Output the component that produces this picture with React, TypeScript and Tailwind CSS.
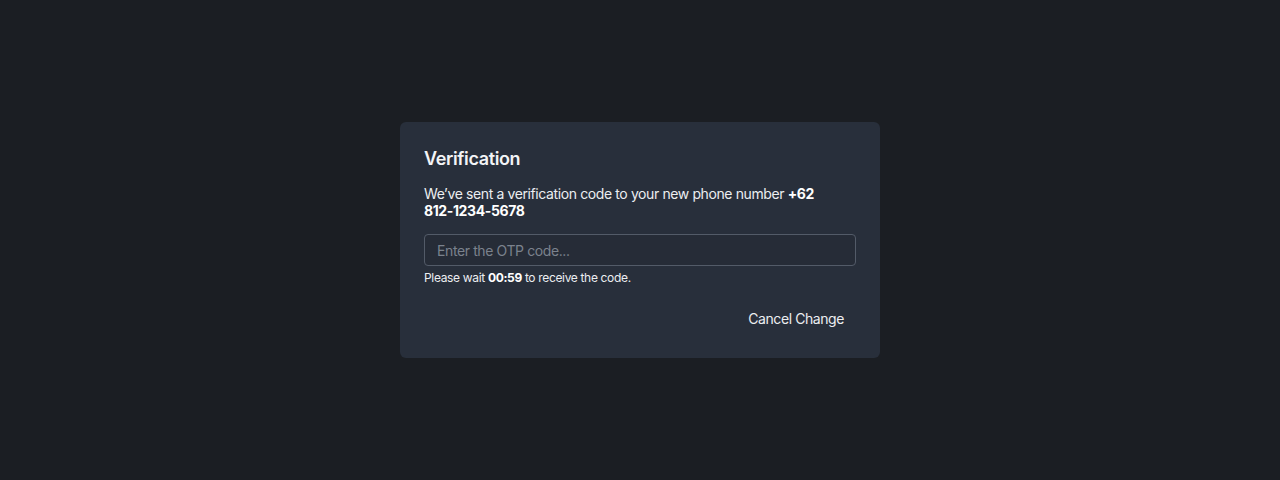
export default function App() {
  return (
    <div className="min-h-[480px] w-full bg-[#1b1e23] flex items-center justify-center" style={{ fontFamily: "Inter, 'Noto Sans', sans-serif" }}>
      <div className="w-[480px] rounded-md bg-[#282f3b] p-6 flex flex-col">
        <h2 className="text-[18px] leading-[24px] font-semibold tracking-[-0.02em] text-[#f3f4f6] translate-y-[1px]">Verification</h2>
        <p className="mt-[15px] text-[14px] leading-[17px] tracking-[-0.028em] text-[#eceef1]">
          We’ve sent a verification code to your new phone number <span className="font-bold text-white">+62</span>{" "}
          <span className="font-bold text-white whitespace-nowrap">812-1234-5678</span>
        </p>
        <input
          className="mt-[15px] h-8 w-full rounded-[4px] border border-[#535b68] bg-[#262c37] px-3 text-[14px] tracking-[-0.028em] text-white placeholder:text-[#7b828d] outline-none"
          placeholder="Enter the OTP code..."
        />
        <p className="mt-[4px] text-[12px] leading-[16px] tracking-[-0.028em] text-[#eceef1]">
          Please wait <span className="font-bold text-white">00:59</span> to receive the code.
        </p>
        <div className="mt-4 flex justify-end">
          <button className="h-8 px-3 rounded text-[14px] tracking-[-0.03em] text-[#eceef1]">Cancel Change</button>
        </div>
      </div>
    </div>
  );
}
